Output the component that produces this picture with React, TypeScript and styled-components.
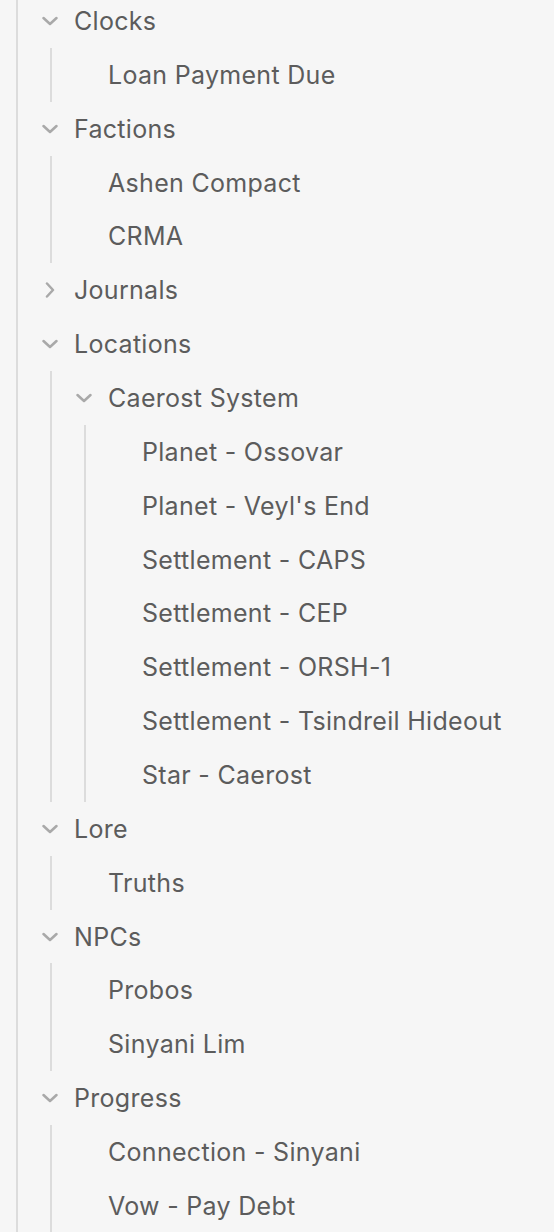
import { FC } from "react"
import styled, { createGlobalStyle } from "styled-components"

interface Node {
  name: string
  open?: boolean
  children?: Node[]
}

const tree: Node[] = [
  { name: "Clocks", open: true, children: [{ name: "Loan Payment Due" }] },
  { name: "Factions", open: true, children: [{ name: "Ashen Compact" }, { name: "CRMA" }] },
  { name: "Journals", open: false, children: [] },
  {
    name: "Locations",
    open: true,
    children: [
      {
        name: "Caerost System",
        open: true,
        children: [
          { name: "Planet - Ossovar" },
          { name: "Planet - Veyl's End" },
          { name: "Settlement - CAPS" },
          { name: "Settlement - CEP" },
          { name: "Settlement - ORSH-1" },
          { name: "Settlement - Tsindreil Hideout" },
          { name: "Star - Caerost" },
        ],
      },
    ],
  },
  { name: "Lore", open: true, children: [{ name: "Truths" }] },
  { name: "NPCs", open: true, children: [{ name: "Probos" }, { name: "Sinyani Lim" }] },
  { name: "Progress", open: true, children: [{ name: "Connection - Sinyani" }, { name: "Vow - Pay Debt" }] },
]

const GlobalStyle = createGlobalStyle`
  html, body {
    margin: 0;
    padding: 0;
    background: #f6f6f6;
    overflow: hidden;
  }
`

const Sidebar = styled.div`
  height: 1232px;
  margin-left: 16px;
  border-left: 2px solid #dcdcdc;
  font-family: Inter, "Liberation Sans", sans-serif;
  overflow: hidden;
`

const List = styled.div`
  margin-top: -6px;
  display: flex;
  flex-direction: column;
`

const Children = styled.div`
  margin-left: 32px;
  border-left: 2px solid #dcdcdc;
  display: flex;
  flex-direction: column;
`

const Row = styled.div<{ $leaf?: boolean }>`
  height: 53.86px;
  display: flex;
  align-items: center;
  gap: 16px;
  padding-left: ${props => props.$leaf ? "56px" : "24px"};
  box-sizing: border-box;
  font-size: 25px;
  letter-spacing: 0.3px;
  color: #5c5c5c;
  white-space: nowrap;
`

const Chevron = styled.svg<{ $open?: boolean }>`
  width: 16px;
  height: 16px;
  flex-shrink: 0;
  color: #a9a9a9;
  transform: rotate(${props => props.$open ? "0deg" : "-90deg"});
`

const Arrow: FC<{ open?: boolean }> = ({ open }) => (
  <Chevron $open={open} viewBox="0 0 16 16" fill="none">
    <path d="M1.5 5 L8 11 L14.5 5" stroke="currentColor" strokeWidth="2.5" strokeLinecap="round" strokeLinejoin="round" />
  </Chevron>
)

const TreeItem: FC<{ node: Node }> = ({ node }) => {
  if (!node.children) return <Row $leaf>{node.name}</Row>
  return (
    <>
      <Row>
        <Arrow open={node.open} />
        {node.name}
      </Row>
      {node.open && node.children.length > 0 && (
        <Children>
          {node.children.map(child => <TreeItem node={child} key={child.name} />)}
        </Children>
      )}
    </>
  )
}

const App: FC = () => (
  <>
    <GlobalStyle />
    <Sidebar>
      <List>
        {tree.map(node => <TreeItem node={node} key={node.name} />)}
      </List>
    </Sidebar>
  </>
)

export default App
